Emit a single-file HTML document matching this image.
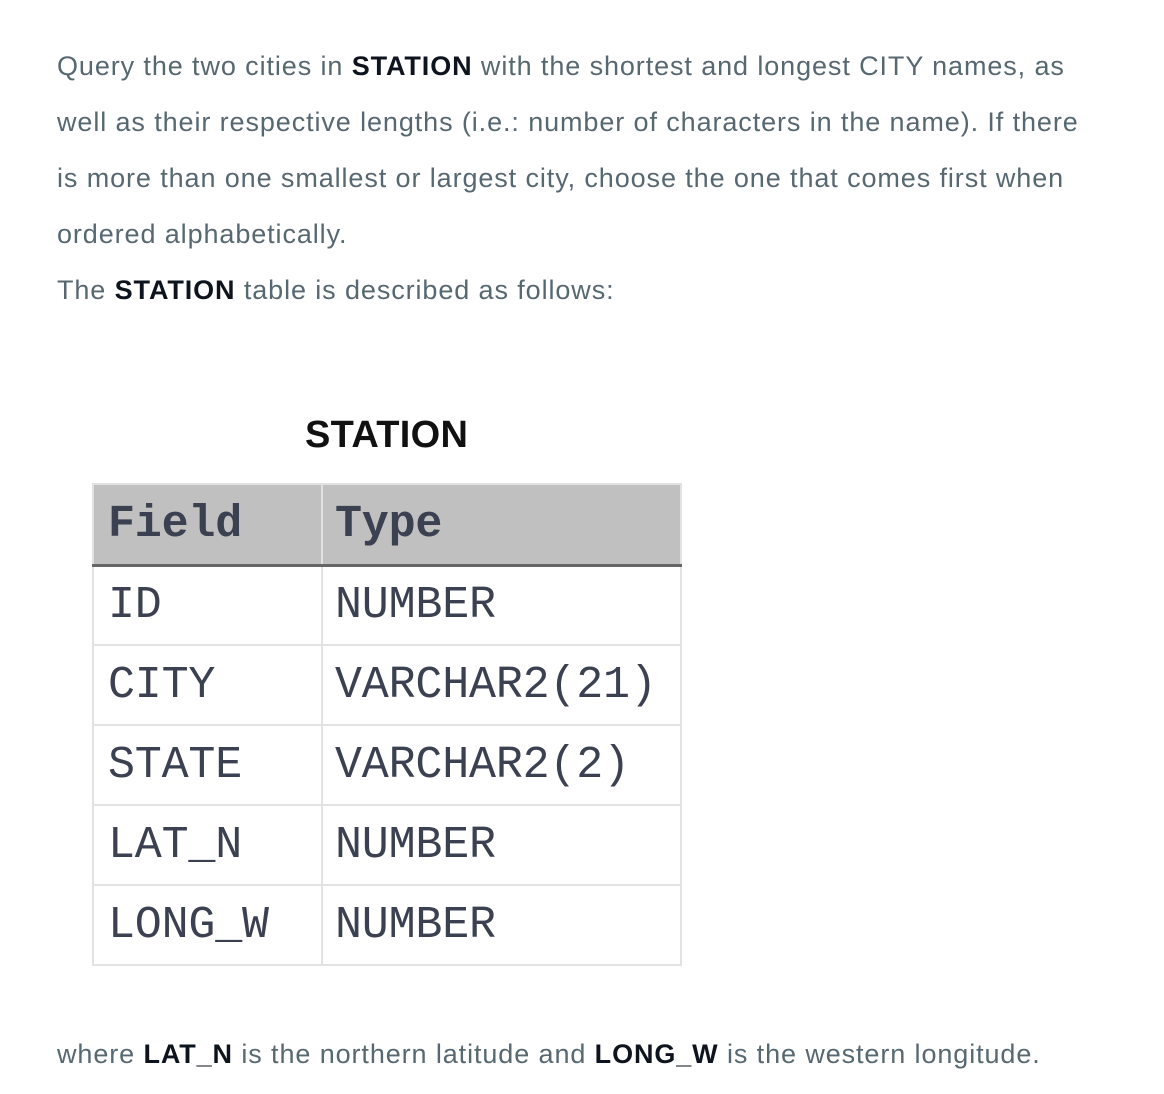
<!DOCTYPE html>
<html><head><meta charset="utf-8"><style>
html,body{margin:0;padding:0;background:#fff;width:1164px;height:1094px;overflow:hidden}
body{font-family:"Liberation Sans",sans-serif;color:#576871;position:relative}
.p{position:absolute;left:57px;font-size:27px;line-height:56px;white-space:nowrap;letter-spacing:0.9px}
b{color:#0e141e}
.title{position:absolute;left:305px;top:414px;font-family:"Liberation Sans",sans-serif;font-weight:bold;font-size:38px;color:#111;letter-spacing:0.3px}
table{position:absolute;left:92px;top:483px;border-collapse:collapse;font-family:"Liberation Mono",monospace;color:#3b4151;font-size:45px;letter-spacing:-0.2px}
td{border:2px solid #e2e2e2;height:80px;padding:0 0 0 14px;box-sizing:border-box;vertical-align:middle}
td.a{width:229px}td.b{width:359px;padding-left:12px}
tr.h td{background:#c0c0c0;font-weight:bold;border-bottom:3px solid #666;height:81px}
</style></head><body>
<div class="p" style="top:38px">Query the two cities in <b>STATION</b> with the shortest and longest CITY names, as<br>well as their respective lengths (i.e.: number of characters in the name). If there<br>is more than one smallest or largest city, choose the one that comes first when<br>ordered alphabetically.<br>The <b>STATION</b> table is described as follows:</div>
<div class="title">STATION</div>
<table>
<tr class="h"><td class="a">Field</td><td class="b">Type</td></tr>
<tr><td class="a">ID</td><td class="b">NUMBER</td></tr>
<tr><td class="a">CITY</td><td class="b">VARCHAR2(21)</td></tr>
<tr><td class="a">STATE</td><td class="b">VARCHAR2(2)</td></tr>
<tr><td class="a">LAT_N</td><td class="b">NUMBER</td></tr>
<tr><td class="a">LONG_W</td><td class="b">NUMBER</td></tr>
</table>
<div class="p" style="top:1026px">where <b>LAT_N</b> is the northern latitude and <b>LONG_W</b> is the western longitude.</div>
</body></html>
